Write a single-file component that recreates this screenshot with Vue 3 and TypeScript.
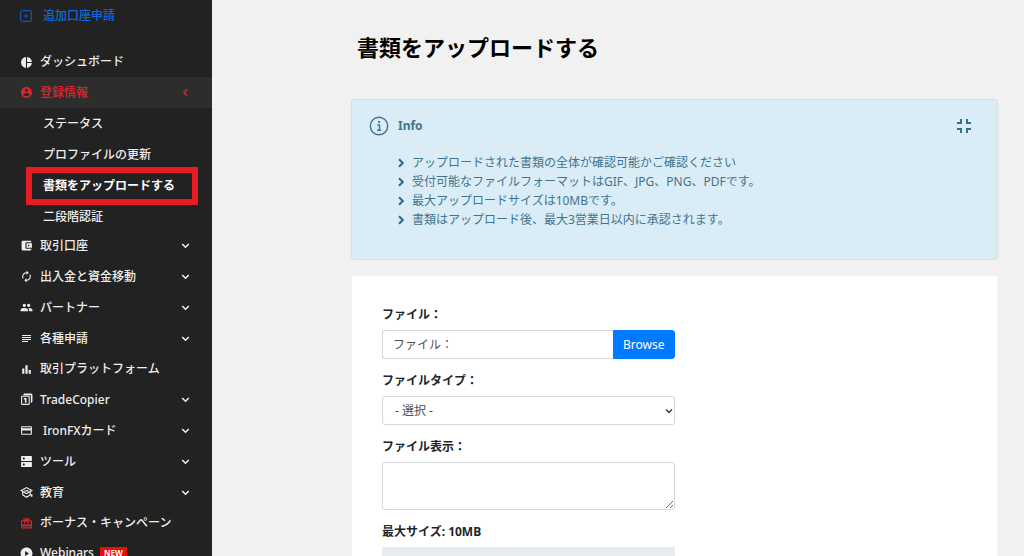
<script setup lang="ts">
import { ref } from 'vue'

interface NavItem {
  label: string
  icon: string
  expandable?: boolean
  open?: boolean
  accent?: boolean
  indent?: boolean
  badge?: string
  children?: string[]
}

const icons: Record<string, string> = {
  pie: 'M11 2v20c-5.07-.5-9-4.79-9-10s3.93-9.5 9-10zm2.03 0v8.99H22c-.47-4.74-4.24-8.52-8.97-8.99zm0 11.01V22c4.74-.47 8.5-4.25 8.97-8.99h-8.97z',
  user: 'M12 2C6.48 2 2 6.48 2 12s4.48 10 10 10 10-4.48 10-10S17.52 2 12 2zm0 3c1.66 0 3 1.34 3 3s-1.34 3-3 3-3-1.34-3-3 1.34-3 3-3zm0 14.2c-2.5 0-4.71-1.28-6-3.22.03-1.99 4-3.08 6-3.08 1.99 0 5.97 1.09 6 3.08-1.29 1.94-3.5 3.22-6 3.22z',
  wallet: 'M21 18v1c0 1.1-.9 2-2 2H5c-1.11 0-2-.9-2-2V5c0-1.1.89-2 2-2h14c1.1 0 2 .9 2 2v1h-9c-1.11 0-2 .9-2 2v8c0 1.1.89 2 2 2h9zm-9-2h10V8H12v8zm4-2.5c-.83 0-1.5-.67-1.5-1.5s.67-1.5 1.5-1.5 1.5.67 1.5 1.5-.67 1.5-1.5 1.5z',
  renew: 'M12 6v3l4-4-4-4v3c-4.42 0-8 3.58-8 8 0 1.57.46 3.03 1.24 4.26L6.7 14.8c-.45-.83-.7-1.79-.7-2.8 0-3.31 2.69-6 6-6zm6.76 1.74L17.3 9.2c.44.84.7 1.79.7 2.8 0 3.31-2.69 6-6 6v-3l-4 4 4 4v-3c4.42 0 8-3.58 8-8 0-1.57-.46-3.03-1.24-4.26z',
  people: 'M16 11c1.66 0 2.99-1.34 2.99-3S17.66 5 16 5s-3 1.34-3 3 1.34 3 3 3zm-8 0c1.66 0 2.99-1.34 2.99-3S9.66 5 8 5 5 6.34 5 8s1.34 3 3 3zm0 2c-2.33 0-7 1.17-7 3.5V19h14v-2.5c0-2.33-4.67-3.5-7-3.5zm8 0c-.29 0-.62.02-.97.05 1.16.84 1.97 1.97 1.97 3.45V19h6v-2.5c0-2.33-4.67-3.5-7-3.5z',
  lines: 'M4 4h18v2H4zM4 8h18v2H4zM4 12h18v2H4zM4 16h12v2H4z',
  bars: 'M4 10h4v10H4zM10 4h4v16h-4zM16 13h4v7h-4z',
  copier: 'M9 1h11c1.7 0 3 1.3 3 3v11c0 1.7-1.3 3-3 3V4H6c0-1.7 1.3-3 3-3zM4 5h12c1.1 0 2 .9 2 2v13c0 1.1-.9 2-2 2H4c-1.1 0-2-.9-2-2V7c0-1.1.9-2 2-2zm0 2v13h12V7H4zm3 2h5v9H9v-6H7V9z',
  card: 'M20 4H4c-1.11 0-1.99.89-1.99 2L2 18c0 1.11.89 2 2 2h16c1.11 0 2-.89 2-2V6c0-1.11-.89-2-2-2zm0 14H4v-6h16v6zm0-10H4V6h16v2z',
  dns: 'M21 13H3c-.55 0-1 .45-1 1v7c0 .55.45 1 1 1h18c.55 0 1-.45 1-1v-7c0-.55-.45-1-1-1zM7 19.5c-1.1 0-2-.9-2-2s.9-2 2-2 2 .9 2 2-.9 2-2 2zM21 2H3c-.55 0-1 .45-1 1v7c0 .55.45 1 1 1h18c.55 0 1-.45 1-1V3c0-.55-.45-1-1-1zM7 8.5c-1.1 0-2-.9-2-2s.9-2 2-2 2 .9 2 2-.9 2-2 2z',
  school: 'M12 2 0 8.5l4 2.2V17l8 5 8-5v-6.3L24 8.5 12 2zm0 2.3 7.8 4.2L12 12.700 4.200 8.500 12 4.300zM6 12l6 3.200 6-3.200v3.900l-6 3.700-6-3.700V12zM8 8h8v2H8zM20 15h3v5h-3z',
  gift: 'M20 6h-2.180c.11-.31.18-.65.18-1 0-1.660-1.340-3-3-3-1.050 0-1.960.54-2.500 1.350l-.5.67-.5-.68C10.960 2.540 10.050 2 9 2 7.340 2 6 3.340 6 5c0 .35.07.69.18 1H4c-1.110 0-1.990.89-1.990 2L2 19c0 1.110.89 2 2 2h16c1.110 0 2-.89 2-2V8c0-1.110-.89-2-2-2zm-5-2c.55 0 1 .45 1 1s-.45 1-1 1-1-.45-1-1 .45-1 1-1zM9 4c.55 0 1 .45 1 1s-.45 1-1 1-1-.45-1-1 .45-1 1-1zm11 15H4v-2h16v2zm0-5H4V8h5.080L7 10.830 8.620 12 12 7.400l3.380 4.600L17 10.830 14.920 8H20v6z',
  play: 'M12 1C5.900 1 1 5.900 1 12s4.900 11 11 11 11-4.900 11-11S18.100 1 12 1zM9.500 16.500v-9l7 4.500-7 4.500z'
}

const items = ref<NavItem[]>([
  { label: 'ダッシュボード', icon: 'pie' },
  {
    label: '登録情報', icon: 'user', expandable: true, open: true, accent: true,
    children: ['ステータス', 'プロファイルの更新', '書類をアップロードする', '二段階認証']
  },
  { label: '取引口座', icon: 'wallet', expandable: true },
  { label: '出入金と資金移動', icon: 'renew', expandable: true },
  { label: 'パートナー', icon: 'people', expandable: true },
  { label: '各種申請', icon: 'lines', expandable: true },
  { label: '取引プラットフォーム', icon: 'bars' },
  { label: 'TradeCopier', icon: 'copier', expandable: true },
  { label: 'IronFXカード', icon: 'card', expandable: true, indent: true },
  { label: 'ツール', icon: 'dns', expandable: true },
  { label: '教育', icon: 'school', expandable: true },
  { label: 'ボーナス・キャンペーン', icon: 'gift' },
  { label: 'Webinars', icon: 'play', badge: 'NEW' }
])

const current = '書類をアップロードする'
const notes = [
  'アップロードされた書類の全体が確認可能かご確認ください',
  '受付可能なファイルフォーマットはGIF、JPG、PNG、PDFです。',
  '最大アップロードサイズは10MBです。',
  '書類はアップロード後、最大3営業日以内に承認されます。'
]

const infoOpen = ref(true)
const fileName = ref('')
const fileType = ref('')
const description = ref('')
const picker = ref<HTMLInputElement | null>(null)

function onPick(e: Event) {
  const files = (e.target as HTMLInputElement).files
  fileName.value = files && files.length ? files[0].name : ''
}
</script>

<template>
  <div class="layout">
    <aside class="sidebar">
      <a href="#" class="add-account">
        <svg viewBox="0 0 12 12" aria-hidden="true">
          <rect x="0.6" y="0.6" width="10.8" height="10.8" rx="1.5" />
          <path d="M6 4v4M4 6h4" />
        </svg>
        <span>追加口座申請</span>
      </a>
      <nav>
        <ul class="menu">
          <li v-for="item in items" :key="item.label">
            <component
              :is="item.expandable ? 'button' : 'a'"
              :href="item.expandable ? undefined : '#'"
              :type="item.expandable ? 'button' : undefined"
              :aria-expanded="item.expandable ? !!item.open : undefined"
              class="row"
              :class="{ parent: item.expandable, accent: item.accent, indent: item.indent }"
              @click.prevent="item.expandable && (item.open = !item.open)"
            >
              <svg class="icon" :class="item.icon" viewBox="0 0 24 24" aria-hidden="true">
                <path :d="icons[item.icon]" fill-rule="evenodd" />
              </svg>
              <span class="text">{{ item.label }}</span>
              <span v-if="item.badge" class="badge">{{ item.badge }}</span>
              <svg v-if="item.expandable" class="caret" viewBox="0 0 9 9" aria-hidden="true">
                <path :d="item.accent ? 'M6 1.5 3 4.5 6 7.5' : 'M1.2 3 4.5 6.2 7.8 3'" />
              </svg>
            </component>
            <ul v-if="item.children && item.open" class="submenu">
              <li v-for="child in item.children" :key="child">
                <a href="#" class="sub" :class="{ current: child === current }">{{ child }}</a>
              </li>
            </ul>
          </li>
        </ul>
      </nav>
    </aside>

    <main class="content">
      <h1>書類をアップロードする</h1>

      <section class="info">
        <header>
          <svg class="info-icon" viewBox="0 0 20 20" aria-hidden="true">
            <circle cx="10" cy="10" r="8.7" />
            <path d="M8.300 9h2.200v5M8 14.200h4.200" />
            <path d="M9.200 6h1.800" class="dot" />
          </svg>
          <h2>Info</h2>
          <button type="button" class="toggle" aria-label="Info" @click="infoOpen = !infoOpen">
            <svg viewBox="0 0 16 16" aria-hidden="true">
              <path d="M5 1v4H1M11 1v4h4M1 11h4v4M15 11h-4v4" />
            </svg>
          </button>
        </header>
        <ul v-show="infoOpen">
          <li v-for="note in notes" :key="note">
            <svg viewBox="0 0 8 10" aria-hidden="true"><path d="M2 1.2 5.8 5 2 8.800" /></svg>
            <span>{{ note }}</span>
          </li>
        </ul>
      </section>

      <form class="panel" @submit.prevent>
        <div class="field">
          <label for="file">ファイル：</label>
          <div class="file">
            <input id="file" type="text" class="control" placeholder="ファイル：" readonly :value="fileName" />
            <button type="button" class="browse" @click="picker?.click()">Browse</button>
            <input ref="picker" type="file" hidden @change="onPick" />
          </div>
        </div>
        <div class="field">
          <label for="type">ファイルタイプ：</label>
          <div class="select">
            <select id="type" v-model="fileType" class="control">
              <option value="">- 選択 -</option>
            </select>
            <svg viewBox="0 0 8 8" aria-hidden="true"><path d="M1 2.500 4 5.500 7 2.500" /></svg>
          </div>
        </div>
        <div class="field">
          <label for="desc">ファイル表示：</label>
          <textarea id="desc" v-model="description" class="control"></textarea>
        </div>
        <div class="field">
          <p id="limit" class="caption">最大サイズ: 10MB</p>
          <div class="progress" role="progressbar" aria-labelledby="limit" aria-valuenow="0"></div>
        </div>
      </form>
    </main>
  </div>
</template>

<style>
body {
  background: #f1f1f1;
}
</style>

<style scoped>
* {
  box-sizing: border-box;
}

.layout {
  display: flex;
  height: 100vh;
  overflow: hidden;
  font: 12px/18px "Noto Sans", "Noto Sans CJK JP", sans-serif;
  color: #212529;
}

button, input, select, textarea {
  font: inherit;
  color: inherit;
}

ul {
  list-style: none;
  margin: 0;
  padding: 0;
}

.sidebar {
  flex: 0 0 212px;
  background: #222;
  color: #eee;
  overflow: hidden;
  font-weight: 500;
}

.add-account {
  display: flex;
  align-items: center;
  gap: 11px;
  height: 31px;
  margin-bottom: 16px;
  padding-left: 20px;
  color: #0c69df;
  text-decoration: none;
}

.add-account svg {
  width: 12px;
  height: 12px;
  fill: none;
  stroke: #1550b0;
  stroke-width: 1.2;
}

.row {
  display: flex;
  align-items: center;
  width: 100%;
  height: 30px;
  padding: 0 22px 0 20px;
  border: 0;
  background: none;
  color: inherit;
  text-align: left;
  text-decoration: none;
  cursor: pointer;
}

.row.parent {
  height: 31px;
}

.row.accent {
  background: #2d2d2d;
  color: #d9292e;
}

.icon {
  flex: none;
  width: 13px;
  height: 13px;
  margin-right: 7px;
  fill: currentColor;
}

.icon.lines {
  width: 12px;
  height: 12px;
  margin-right: 8px;
}

.icon.gift {
  fill: #d9292e;
}

.indent .icon {
  margin-right: 10px;
}

.caret {
  width: 9px;
  height: 9px;
  margin-left: auto;
  fill: none;
  stroke: currentColor;
  stroke-width: 1.6;
}

.badge {
  margin-left: 6px;
  padding: 0 4px;
  background: #f00b0b;
  color: #fff;
  font-size: 8px;
  font-weight: 700;
  line-height: 12px;
}

.submenu {
  margin-bottom: -2px;
}

.sub {
  position: relative;
  display: block;
  padding-left: 43px;
  line-height: 31px;
  color: inherit;
  text-decoration: none;
}

.sub.current {
  color: #fff;
  font-weight: 700;
}

.sub.current::after {
  content: "";
  position: absolute;
  inset: -3px 14px -4px 26px;
  border: 6px solid #e81c24;
  pointer-events: none;
}

.content {
  flex: 1;
  min-width: 0;
  padding: 31px 26px 0 139px;
}

h1 {
  margin: 0 0 36px;
  padding-left: 6px;
  color: #000;
  font-size: 22px;
  line-height: 32px;
}

.info {
  margin-bottom: 15px;
  padding: 15px 25px 30px 17px;
  border: 1px solid #c6e5ef;
  border-radius: 3px;
  background: #daecf6;
  color: #3f7590;
}

.info header {
  display: flex;
  align-items: center;
  height: 22px;
  margin-bottom: 16px;
}

.info h2 {
  margin: 0;
  font-size: 12px;
  line-height: 18px;
}

.info-icon {
  width: 20px;
  height: 20px;
  margin-right: 9px;
  fill: none;
  stroke: currentColor;
  stroke-width: 1.4;
}

.info-icon .dot {
  stroke-width: 2;
}

.toggle {
  display: flex;
  margin-left: auto;
  padding: 0;
  border: 0;
  background: none;
  cursor: pointer;
}

.toggle svg {
  width: 16px;
  height: 16px;
  fill: none;
  stroke: #34708e;
  stroke-width: 2;
}

.info ul {
  padding-left: 28px;
}

.info li {
  display: flex;
  align-items: center;
  gap: 7px;
  line-height: 19px;
}

.info li svg {
  width: 8px;
  height: 10px;
  fill: none;
  stroke: #2f6887;
  stroke-width: 2;
}

.panel {
  padding: 30px;
  border: 1px solid #f4f4f4;
  border-radius: 4px;
  background: #fff;
}

.field {
  width: 50%;
  margin-bottom: 13px;
}

label,
.caption {
  display: block;
  margin: 0 0 6px;
  font-weight: 700;
  line-height: 18px;
}

.control {
  display: block;
  width: 100%;
  height: 29px;
  padding: 0 10px;
  border: 1px solid #d3d7da;
  border-radius: 3px;
  background: #fff;
  color: #495057;
  outline: none;
}

.control::placeholder {
  color: #495057;
  opacity: 1;
}

.file {
  display: flex;
}

.file .control {
  flex: 1;
  min-width: 0;
  border-right: 0;
  border-radius: 3px 0 0 3px;
}

.browse {
  padding: 0 9px;
  border: 1px solid #007bff;
  border-radius: 0 3px 3px 0;
  background: #007bff;
  color: #fff;
  cursor: pointer;
}

.select {
  position: relative;
}

.select .control {
  appearance: none;
  padding-left: 12px;
}

.select svg {
  position: absolute;
  right: 2px;
  top: 11px;
  width: 8px;
  height: 8px;
  fill: none;
  stroke: #333;
  stroke-width: 1.4;
  pointer-events: none;
}

textarea.control {
  height: 48px;
  resize: vertical;
}

.progress {
  height: 16px;
  background: #e9ecef;
}
</style>
